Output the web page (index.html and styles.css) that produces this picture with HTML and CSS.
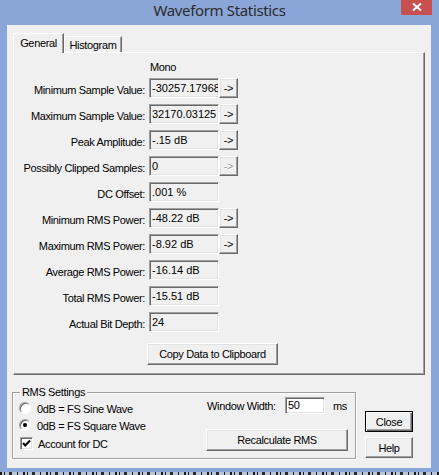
FILE: index.html
```html
<!DOCTYPE html>
<html>
<head>
<meta charset="utf-8">
<link rel="stylesheet" href="styles.css">
</head>
<body>
<div class="window">
  <div class="titlebar">
    <span class="title">Waveform Statistics</span>
    <div class="close-x">
      <svg width="10" height="8" viewBox="0 0 10 8"><path d="M1 0.5 L9 7.5 M9 0.5 L1 7.5" stroke="#fff" stroke-width="2" fill="none"/></svg>
    </div>
  </div>
  <div class="client">
    <div class="tabs">
      <div class="tab active">General</div>
      <div class="tab">Histogram</div>
    </div>
    <div class="panel">
      <div class="mono">Mono</div>
      <div class="stats">
        <div class="lbl">Minimum Sample Value:</div><div class="val">-30257.17968</div><button class="btn arrow">-&gt;</button>
        <div class="lbl">Maximum Sample Value:</div><div class="val">32170.03125</div><button class="btn arrow">-&gt;</button>
        <div class="lbl">Peak Amplitude:</div><div class="val">-.15 dB</div><button class="btn arrow">-&gt;</button>
        <div class="lbl">Possibly Clipped Samples:</div><div class="val">0</div><button class="btn arrow disabled">-&gt;</button>
        <div class="lbl">DC Offset:</div><div class="val">.001 %</div><div></div>
        <div class="lbl">Minimum RMS Power:</div><div class="val">-48.22 dB</div><button class="btn arrow">-&gt;</button>
        <div class="lbl">Maximum RMS Power:</div><div class="val">-8.92 dB</div><button class="btn arrow">-&gt;</button>
        <div class="lbl">Average RMS Power:</div><div class="val">-16.14 dB</div><div></div>
        <div class="lbl">Total RMS Power:</div><div class="val">-15.51 dB</div><div></div>
        <div class="lbl">Actual Bit Depth:</div><div class="val">24</div><div></div>
      </div>
      <button class="btn copy">Copy Data to Clipboard</button>
    </div>
    <div class="bottom">
      <div class="group">
        <div class="group-title">RMS Settings</div>
        <div class="group-body">
          <div class="left-col">
            <div class="opt"><span class="radio"></span><span class="opt-text">0dB = FS Sine Wave</span></div>
            <div class="opt opt2"><span class="radio"><span class="dot"></span></span><span class="opt-text">0dB = FS Square Wave</span></div>
            <div class="opt opt3"><span class="check"><svg width="11" height="11" viewBox="0 0 11 11"><polyline points="2,5 4.3,7.5 9,2.5" fill="none" stroke="#000" stroke-width="2"/></svg></span><span class="opt-text">Account for DC</span></div>
          </div>
          <div class="right-col">
            <div class="ww-row">
              <span class="ww-label">Window Width:</span>
              <span class="edit">50</span>
              <span class="ms">ms</span>
            </div>
            <button class="btn recalc">Recalculate RMS</button>
          </div>
        </div>
      </div>
      <div class="side">
        <button class="btn side-btn default">Close</button>
        <button class="btn side-btn">Help</button>
      </div>
    </div>
  </div>
  <div class="underlay"></div>
</div>
</body>
</html>
```

FILE: styles.css
```css
* { box-sizing: border-box; }

body {
  margin: 0;
  background: #8aa6d9;
  font-family: "Liberation Sans", Arial, sans-serif;
  font-size: 11px;
  letter-spacing: -0.35px;
  color: #000;
}

.window {
  width: 439px;
  height: 475px;
  background: #8aa6d9;
  overflow: hidden;
  display: flex;
  flex-direction: column;
}

.titlebar {
  height: 25px;
  flex: none;
  display: grid;
  grid-template-columns: 1fr auto 1fr;
  align-items: start;
}

.title {
  grid-column: 2;
  font-family: "Noto Sans", sans-serif;
  font-size: 15px;
  line-height: 20px;
  letter-spacing: -0.35px;
  color: #2b2b2b;
}

.close-x {
  grid-column: 3;
  justify-self: end;
  margin-right: 7px;
  width: 31px;
  height: 15px;
  background: #c75050;
  display: flex;
  justify-content: center;
  padding-top: 3px;
}
.close-x svg { display: block; }

.client {
  flex: none;
  margin: 0 8px 0 7px;
  height: 443px;
  background: #f0f0f0;
  padding: 8px 6px 0 6px;
}

.tabs {
  display: flex;
  align-items: flex-start;
  height: 19px;
  position: relative;
  z-index: 1;
}

.tab {
  margin-top: 3px;
  width: 58px;
  height: 16px;
  border-top: 1px solid #fff;
  border-left: 1px solid #fff;
  border-right: 1px solid #696969;
  box-shadow: inset -1px 0 #a0a0a0;
  text-align: center;
  padding-top: 2px;
  line-height: 13px;
}

.tab.active {
  margin-top: 0;
  width: 51px;
  height: 20px;
  background: #f0f0f0;
  padding-top: 3px;
}

.panel {
  height: 323px;
  border: 1px solid;
  border-color: #fff #696969 #696969 #fff;
  box-shadow: inset -1px -1px #a0a0a0;
}

.mono {
  margin: 8px 0 0 136px;
  line-height: 13px;
}

.stats {
  margin-top: 4px;
  display: grid;
  grid-template-columns: 135px 70px 19px;
  grid-auto-rows: 20px;
  row-gap: 6px;
}

.lbl {
  text-align: right;
  padding: 4px 4px 0 0;
  line-height: 16px;
  white-space: nowrap;
}

.val {
  border: 1px solid;
  border-color: #a0a0a0 #fff #fff #a0a0a0;
  box-shadow: inset 1px 1px #696969, inset -1px -1px #e3e3e3;
  background: #f0f0f0;
  padding-left: 2px;
  line-height: 18px;
  letter-spacing: 0;
  white-space: nowrap;
  overflow: hidden;
}

.btn {
  font: inherit;
  letter-spacing: inherit;
  color: #000;
  background: #f0f0f0;
  margin: 0;
  padding: 0;
  border: 1px solid;
  border-color: #fff #696969 #696969 #fff;
  box-shadow: inset -1px -1px #a0a0a0, inset 1px 1px #e3e3e3;
  border-radius: 0;
  text-align: center;
  display: block;
}

.arrow {
  height: 20px;
  line-height: 16px;
}

.arrow.disabled {
  color: #a0a0a0;
  text-shadow: 1px 1px #fff;
}

.copy {
  margin: 11px 0 0 133px;
  width: 131px;
  height: 22px;
}

.bottom {
  display: flex;
  align-items: flex-start;
  margin: 17px 0 0 -1px;
}

.group {
  width: 344px;
  height: 67px;
  border: 1px solid #a0a0a0;
  box-shadow: inset 1px 1px #fff, 1px 1px #fff;
}

.group-title {
  margin: -7px 0 0 7px;
  padding: 0 2px;
  background: #f0f0f0;
  width: max-content;
  line-height: 13px;
}

.group-body {
  margin-top: 3px;
  padding-left: 6px;
  display: grid;
  grid-template-columns: 187px 142px;
}

.opt {
  display: flex;
  align-items: flex-start;
  height: 17px;
}
.opt2 { height: 18px; }

.opt-text {
  margin: 1px 0 0 6px;
  line-height: 13px;
  white-space: nowrap;
}
.opt3 .opt-text { margin-left: 5px; }

.radio {
  width: 12px;
  height: 12px;
  border-radius: 50%;
  background: #fff;
  border: 1px solid;
  border-color: #a0a0a0 #fff #fff #a0a0a0;
  box-shadow: inset 1px 1px #696969;
  display: flex;
  align-items: center;
  justify-content: center;
  flex: none;
}

.dot {
  width: 4px;
  height: 4px;
  border-radius: 50%;
  background: #000;
}

.check {
  margin-left: 1px;
  width: 13px;
  height: 13px;
  background: #fff;
  border: 1px solid;
  border-color: #a0a0a0 #fff #fff #a0a0a0;
  box-shadow: inset 1px 1px #696969, inset -1px -1px #e3e3e3;
  flex: none;
}
.check svg { display: block; }

.right-col {
  margin-top: -5px;
}

.ww-row {
  display: flex;
  align-items: flex-start;
  height: 17px;
}

.ww-label {
  width: 79px;
  padding-left: 1px;
  margin-top: 3px;
  line-height: 13px;
  white-space: nowrap;
}

.edit {
  width: 40px;
  height: 17px;
  background: #fff;
  border: 1px solid;
  border-color: #a0a0a0 #fff #fff #a0a0a0;
  box-shadow: inset 1px 1px #696969, inset -1px -1px #e3e3e3;
  padding-left: 2px;
  line-height: 15px;
}

.ms {
  margin: 3px 0 0 8px;
  line-height: 13px;
}

.recalc {
  margin-top: 15px;
  width: 142px;
  height: 22px;
}

.side {
  margin: 19px 0 0 9px;
  display: flex;
  flex-direction: column;
  gap: 5px;
}

.side-btn {
  width: 48px;
  height: 21px;
}

.side-btn.default {
  border: 1px solid #000;
  box-shadow: inset 1px 1px #fff, inset -1px -1px #696969, inset -2px -2px #a0a0a0;
}

.underlay {
  flex: none;
  margin-top: 4px;
  height: 3px;
  background:
    repeating-linear-gradient(90deg, #1a1a1a 0 2px, #b9c4d6 2px 4px, #1a1a1a 4px 5px, #b9c4d6 5px 9px, #2a2a2a 9px 12px, #b9c4d6 12px 17px, #1a1a1a 17px 18px, #b9c4d6 18px 23px);
}
```
